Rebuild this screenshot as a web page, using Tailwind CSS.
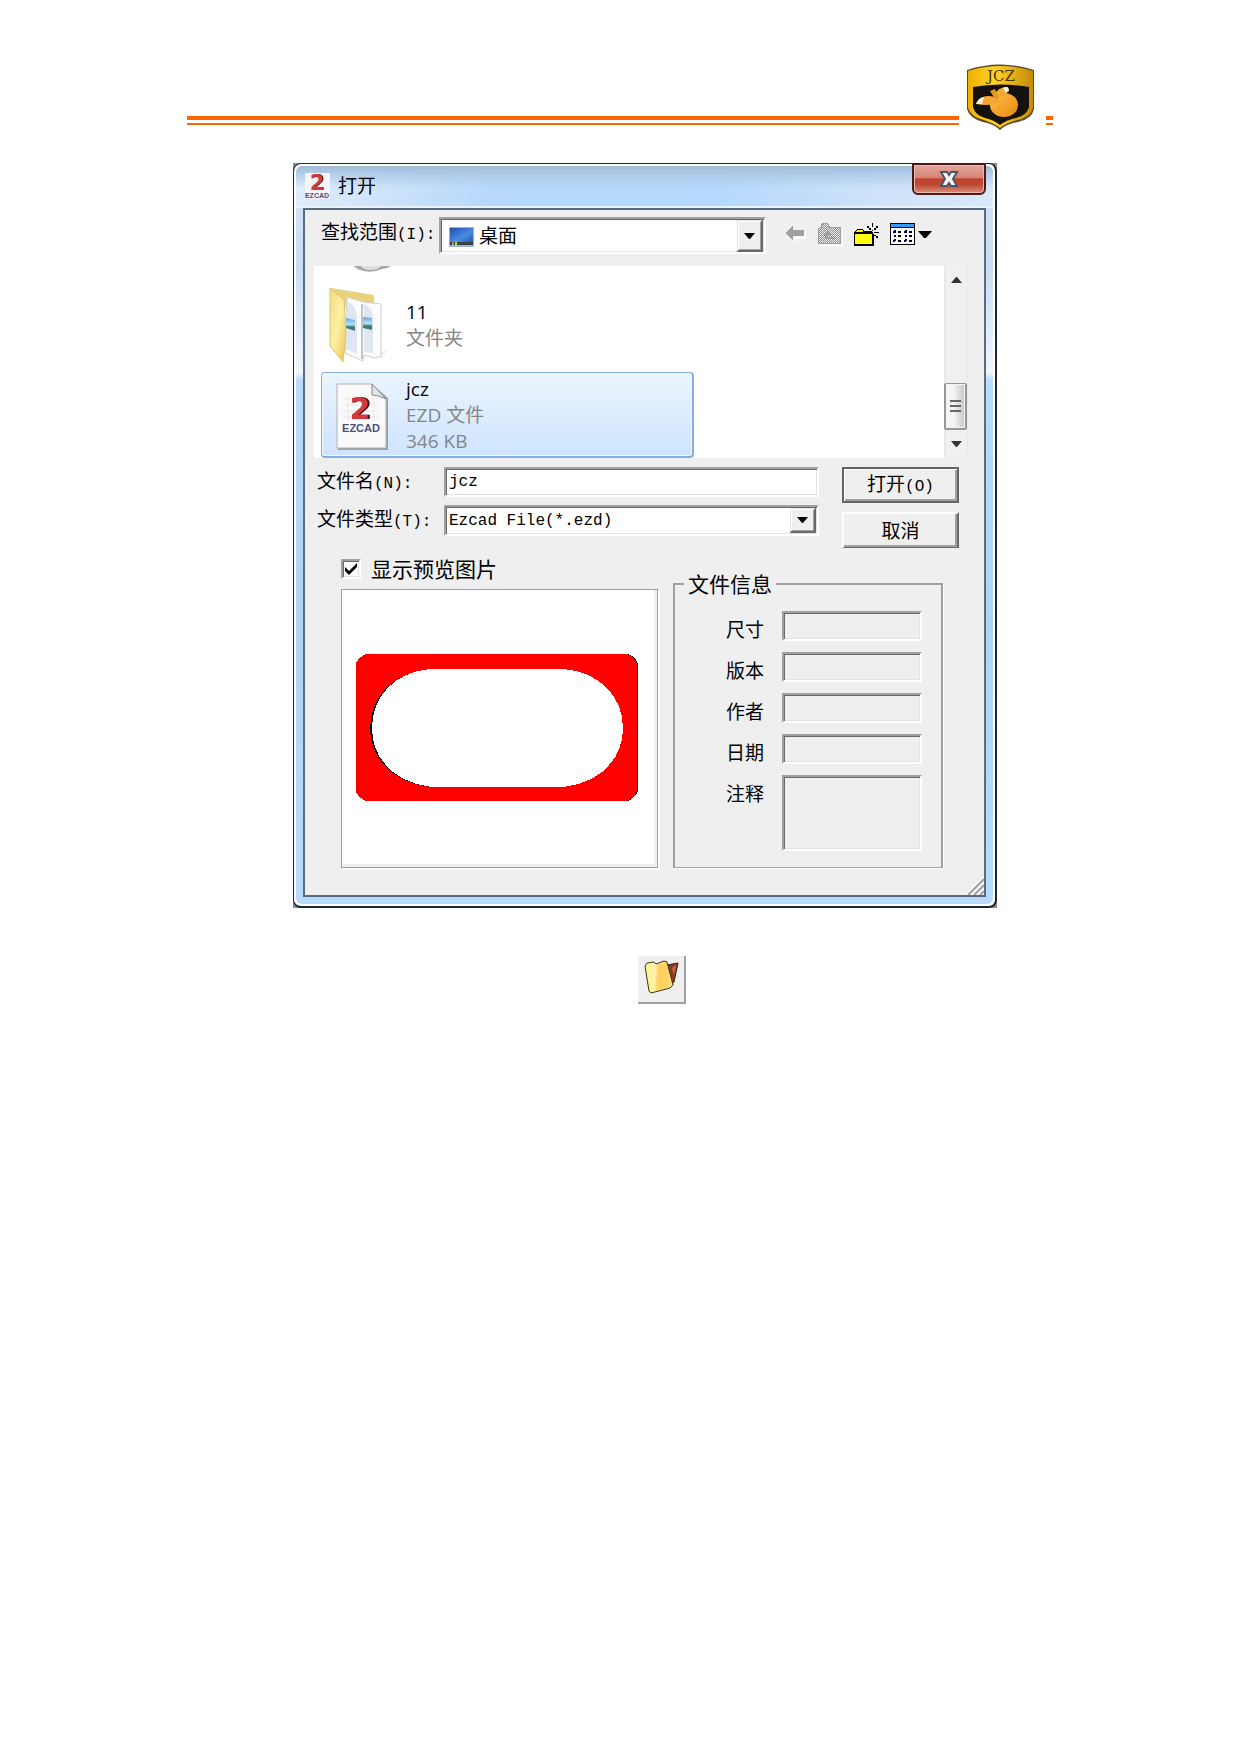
<!DOCTYPE html>
<html lang="zh-CN">
<head>
  <meta charset="UTF-8" />
  <meta name="viewport" content="width=device-width, initial-scale=1.0"/>
  <title>打开</title>
  <script src="https://cdn.jsdelivr.net/npm/@tailwindcss/browser@4"></script>
</head>
<body class="bg-white text-black font-['Open_Sans','Noto_Sans_CJK_SC',sans-serif]">

  <div class="mx-auto w-full max-w-[866px] pt-16">

    <!-- Page header: double rule and shield -->
    <header class="flex items-end">
      <div class="mb-[5px] h-[9px] flex-1 border-t-4 border-b-2 border-[#ff6600]"></div>
      <svg class="mr-[11px] ml-[7px] h-[66px] w-[69px]" viewBox="0 0 69 66" role="img" aria-label="JCZ">
        <defs>
          <linearGradient id="gold" x1="0" y1="0" x2="1" y2="0">
            <stop offset="0" stop-color="#f0b000"/><stop offset=".4" stop-color="#ffd428"/><stop offset="1" stop-color="#c88a08"/>
          </linearGradient>
          <linearGradient id="fruit" x1="0" y1="0" x2="1" y2="1">
            <stop offset="0" stop-color="#ffc04a"/><stop offset="1" stop-color="#e88a10"/>
          </linearGradient>
        </defs>
        <path d="M1 6Q34 -5 68 6V45Q66 55 52 58Q40 60 34 66Q28 60 17 58Q3 54 1 45Z" fill="#5a4a28"/>
        <path d="M2 7Q34 -3 67 7V44Q64 54 51 56Q40 59 34 64Q28 59 18 56Q5 53 2 44Z" fill="url(#gold)"/>
        <path d="M7 23Q34 18 63 23V43Q61 51 50 54Q40 56 34 61Q28 56 19 54Q9 51 7 43Z" fill="#15110f"/>
        <text x="35" y="17" text-anchor="middle" font-family="DejaVu Serif, serif" font-size="15" fill="#4a3200">JCZ</text>
        <ellipse cx="38" cy="41" rx="14" ry="12" fill="url(#fruit)"/>
        <path d="M10 40Q15 29 29 33L34 37Q26 43 10 40Z" fill="#f5a832"/>
        <path d="M10 40Q12 34 18 33L16 40Z" fill="#fff3d8"/>
        <path d="M29 31Q31 23 42 23Q43 30 34 34Z" fill="#f5a832"/>
        <path d="M37 24Q43 21 43 27L40 29Z" fill="#fff3d8"/>
        <path d="M24 27L29 25L33 34L29 35Z" fill="#e0961f"/>
      </svg>
      <div class="mb-[5px] h-[9px] w-[7px] border-t-4 border-b-2 border-[#ff6600]"></div>
    </header>

    <!-- Open dialog -->
    <main class="mt-[33px] flex justify-center pl-[50px]">
      <div class="w-full max-w-[704px] bg-[#8a8a8a]">
        <div class="rounded-lg border border-r-2 border-b-2 border-[#1c2530] bg-white p-[2px]">
          <div class="rounded-md bg-[linear-gradient(to_bottom,#d3e4f6_0%,#c8ddf3_14%,#eef5fd_28%,#b9dbfd_29%,#b0d2f5_62%,#b9dbfd_100%)] pb-[7px]">

            <div class="flex h-[42px] items-start justify-between rounded-t-md border-b-2 border-[#e8f3fd] bg-[linear-gradient(to_bottom,#a3bbd5_0px,#adc8e6_6px,transparent_22px),linear-gradient(to_right,#dfecfa_0%,#b7d8fb_28%,#b5d8fc_60%,#cfe3f9_85%,#d8e8fa_100%)] pl-[9px]">
              <div class="flex items-center gap-2 pt-[7px]">
                <svg class="h-[26px] w-[25px] overflow-visible" viewBox="0 0 25 26" aria-hidden="true">
                  <rect width="25" height="26" fill="#f6f4f8"/>
                  <text x="12" y="17" text-anchor="middle" font-family="DejaVu Sans, sans-serif" font-weight="bold" font-size="21" fill="#d23a3e" class="drop-shadow-[1px_0_0_#3a1515]">2</text>
                  <text x="12" y="25" text-anchor="middle" font-family="Liberation Sans, sans-serif" font-weight="bold" font-size="7" fill="#4a5078">EZCAD</text>
                </svg>
                <h1 class="text-[19px] leading-6">打开</h1>
              </div>
              <button type="button" aria-label="关闭" class="-mt-[2px] mr-[7px] flex h-[31px] w-[74px] items-center justify-center rounded-b-md border-2 border-t border-[#4a1a18] bg-[linear-gradient(to_bottom,#e3a79c_0%,#d58478_45%,#c2412b_50%,#bd4a34_70%,#dc8e7c_100%)] shadow-[inset_0_0_0_1px_#eab8ae]">
                <svg class="h-[18px] w-[20px]" viewBox="0 0 20 18" aria-hidden="true">
                  <path d="M2 2H8L10 5L12 2H18L14 9L18 16H12L10 13L8 16H2L6 9Z" fill="#f4f4f4" stroke="#4f5568" stroke-width="2"/>
                </svg>
              </button>
            </div>

            <form class="relative mx-[7px] border-2 border-[#5a6b7e] bg-[#efefef] pt-[7px] pb-[27px]">

              <div class="flex items-center pr-[52px] pl-4">
                <label for="lookIn" class="w-[118px] pb-1 text-[19px] leading-6">查找范围<span class="font-['Liberation_Mono',monospace] text-[16px]">(I):</span></label>
                <div class="relative flex-1">
                  <select id="lookIn" class="block h-[37px] w-full appearance-none border-2 border-[#a0a0a0] border-r-white border-b-white bg-white pl-[38px] text-[19px] leading-6 shadow-[inset_1px_1px_0_#696969,inset_-1px_-1px_0_#e3e3e3] outline-none">
                    <option>桌面</option>
                  </select>
                  <svg class="pointer-events-none absolute top-[10px] left-[10px] h-5 w-[25px]" viewBox="0 0 25 20" aria-hidden="true">
                    <defs>
                      <linearGradient id="screen" x1="0" y1="0" x2="1" y2="1">
                        <stop offset="0" stop-color="#1c4fb0"/><stop offset=".6" stop-color="#4a8ce0"/><stop offset="1" stop-color="#1e58b8"/>
                      </linearGradient>
                    </defs>
                    <rect width="25" height="20" fill="#9fb4cc"/>
                    <rect x="1" y="1" width="23" height="14" fill="url(#screen)"/>
                    <rect x="1" y="15" width="23" height="3" fill="#3a3f48"/>
                    <rect x="3" y="14" width="2" height="2" fill="#f06030"/><rect x="6" y="14" width="2" height="2" fill="#70d040"/>
                    <rect x="3" y="16" width="2" height="2" fill="#40b0f0"/><rect x="6" y="16" width="2" height="2" fill="#f8d030"/>
                  </svg>
                  <span class="pointer-events-none absolute top-[3px] right-[3px] flex h-8 w-[26px] items-center justify-center border-t border-r-2 border-b-2 border-l border-t-[#e3e3e3] border-r-[#696969] border-b-[#696969] border-l-[#e3e3e3] bg-[#efefef] shadow-[inset_1px_1px_0_#fff,inset_-1px_-1px_0_#a0a0a0]">
                    <svg class="h-[6px] w-[11px]" viewBox="0 0 11 6" aria-hidden="true"><path d="M0 0H11L6 6H5Z"/></svg>
                  </span>
                </div>

                <div class="flex items-center pb-[3px] pl-[19px]">
                  <button type="button" aria-label="后退">
                    <svg class="h-[18px] w-[22px]" viewBox="0 0 22 18" shape-rendering="crispEdges" aria-hidden="true">
                      <path d="M2 10L10 18V14H21V7L10 12Z" fill="#fff"/>
                      <path d="M0 8L8 0V5H19V11H8V16Z" fill="#a0a0a0"/>
                    </svg>
                  </button>
                  <button type="button" aria-label="向上一级" class="ml-[11px]">
                    <svg class="h-[23px] w-[25px]" viewBox="0 0 25 23" shape-rendering="crispEdges" aria-hidden="true">
                      <defs>
                        <pattern id="grayDots" width="2" height="2" patternUnits="userSpaceOnUse">
                          <rect width="2" height="2" fill="#efefef"/><rect width="1" height="1" fill="#8c8c8c"/><rect x="1" y="1" width="1" height="1" fill="#8c8c8c"/>
                        </pattern>
                      </defs>
                      <path d="M2 22H24V6H25V23H2Z" fill="#fff"/>
                      <path d="M0 21V5H2L4 0H10L12 4H23V21Z" fill="#a0a0a0"/>
                      <path d="M1 20V6H3L5 1H9L11 5H22V20Z" fill="url(#grayDots)"/>
                      <path d="M9 7L13 12H10V14H17V16H7V12H5Z" fill="#a0a0a0"/>
                    </svg>
                  </button>
                  <button type="button" aria-label="新建文件夹" class="ml-[11px]">
                    <svg class="h-[23px] w-[26px]" viewBox="0 0 26 23" shape-rendering="crispEdges" aria-hidden="true">
                      <defs>
                        <pattern id="yellowDots" width="2" height="2" patternUnits="userSpaceOnUse">
                          <rect width="2" height="2" fill="#ffff00"/><rect width="1" height="1" fill="#ffffb0"/>
                        </pattern>
                      </defs>
                      <path d="M0 23V9L3 6H8L10 8H18L20 12V23Z"/>
                      <path d="M1 9H9V8L8 7H4Z" fill="#ff0"/>
                      <rect x="1" y="11" width="17" height="10" fill="url(#yellowDots)"/>
                      <path d="M18 0H19V4H18ZM18 7H19V8H18ZM18 14H19V17H18ZM20 9H25V10H20ZM12 9H16V10H12ZM13 3H15V5H13ZM15 5H17V7H15ZM22 3H24V5H22ZM20 5H22V7H20ZM20 12H22V13H20ZM22 13H24V15H22Z"/>
                    </svg>
                  </button>
                  <button type="button" aria-label="查看" class="ml-[10px] flex items-center gap-[3px]">
                    <svg class="h-[22px] w-[25px]" viewBox="0 0 25 22" shape-rendering="crispEdges" aria-hidden="true">
                      <path d="M0 0H25V22H0Z"/>
                      <path d="M1 1H24V4H1Z" fill="#3399ff"/>
                      <path d="M1 5H24V21H1Z" fill="#fff"/>
                      <path d="M4 7H6V10H4ZM4 12H6V14H4ZM4 16H6V18H4ZM15 7H17V10H15ZM15 12H17V14H15ZM15 16H17V18H15Z" fill="#000080"/>
                      <path d="M3 8H5V10H3ZM3 17H5V19H3ZM14 8H16V10H14ZM14 17H16V19H14Z" fill="#000080"/>
                      <path d="M8 8H11V10H8ZM8 12H11V14H8ZM8 17H11V19H8ZM19 8H22V10H19ZM19 12H22V14H19ZM19 17H22V19H19Z"/>
                    </svg>
                    <svg class="h-[7px] w-[14px]" viewBox="0 0 14 7" aria-hidden="true"><path d="M0 0H14L8 7H6Z"/></svg>
                  </button>
                </div>
              </div>

              <!-- File list -->
              <div class="mt-3 mr-4 ml-[9px] flex h-48 bg-white">
                <div class="flex-1 overflow-hidden pl-[7px]">
                  <svg class="ml-8 h-[6px] w-10" viewBox="0 0 40 6" aria-hidden="true">
                    <path d="M1 0H38Q34 3 29 3Q18 8 7 4Q2 2 1 0Z" fill="#a8a8a8"/>
                    <path d="M8 0H28Q26 4 16 4Q9 3 8 0Z" fill="#dedede"/>
                  </svg>
                  <div class="mt-[15px] flex items-center gap-[17px] pl-2">
                    <svg class="h-[75px] w-[60px]" viewBox="0 0 60 75" aria-hidden="true">
                      <defs>
                        <linearGradient id="folder" x1="0" y1="0" x2="1" y2="1">
                          <stop offset="0" stop-color="#f0dc84"/><stop offset=".5" stop-color="#fdf0a4"/><stop offset="1" stop-color="#e8c050"/>
                        </linearGradient>
                        <linearGradient id="photo" x1="0" y1="0" x2="0" y2="1">
                          <stop offset="0" stop-color="#5aa8e8"/><stop offset=".5" stop-color="#b8e0f8"/><stop offset=".7" stop-color="#3c7c60"/><stop offset="1" stop-color="#3a78b8"/>
                        </linearGradient>
                      </defs>
                      <path d="M44 68L60 62L52 71Z" fill="#f0f0f0"/>
                      <path d="M2 1L45 8V28L14 20Z" fill="#e9d27c"/>
                      <path d="M18 10L34 15L52 17V69L46 71L35 68L34 74L16 66Z" fill="#fcfcfc" stroke="#d0d0d0"/>
                      <path d="M18 14Q27 18 28 30V67L17 62Z" fill="#dfe6f2"/>
                      <path d="M35 17Q43 20 44 30V66L35 65Z" fill="#dfe6f2"/>
                      <path d="M17 31L26 33V44L17 41Z" fill="url(#photo)"/>
                      <path d="M34 30L43 31V43L34 41Z" fill="url(#photo)"/>
                      <path d="M33 17V72" stroke="#c4c4c4" stroke-width="2"/>
                      <path d="M1 1L15 13L17 48L14 75L1 59Z" fill="url(#folder)" stroke="#e0c46c"/>
                    </svg>
                    <div class="text-[19px] leading-[26px]">
                      <p>11</p>
                      <p class="text-[#858585]">文件夹</p>
                    </div>
                  </div>
                  <div class="mt-[10px] mr-[250px] flex h-[86px] items-center gap-[17px] rounded-sm border border-r-2 border-b-2 border-[#84acdd] bg-linear-to-b from-[#ebf4fe] to-[#cfe4ff] pl-[7px] shadow-[inset_0_0_0_1px_#f2f8ff]">
                    <svg class="h-[70px] w-[60px]" viewBox="0 0 60 70" aria-hidden="true">
                      <path d="M9 5H44L59 18V70H9Z" fill="#9aa0a8"/>
                      <path d="M8 4H43L57 18V68H8Z" fill="#fbfafa" stroke="#b0b0b0"/>
                      <path d="M43 4V15Q49 15 57 19Z" fill="#e4e4e6" stroke="#888"/>
                      <path d="M14 19H44M14 25H50M14 31H50M14 37H50M19 15V41M45 19V41" stroke="#ebe6ea"/>
                      <text x="31" y="39" text-anchor="middle" font-family="DejaVu Sans, sans-serif" font-weight="bold" font-size="30" fill="#d23a3e" class="drop-shadow-[2px_0_0_#3a1515]">2</text>
                      <text x="32" y="52" text-anchor="middle" font-family="Liberation Sans, sans-serif" font-weight="bold" font-size="11" fill="#4a5080">EZCAD</text>
                    </svg>
                    <div class="text-[19px] leading-[26px] text-[#858585]">
                      <p class="text-black">jcz</p>
                      <p>EZD 文件</p>
                      <p>346 KB</p>
                    </div>
                  </div>
                </div>
                <div class="flex w-6 flex-col border-r border-l-2 border-[#e8e8e8] bg-[#f0f0f0]">
                  <button type="button" aria-label="向上滚动" class="flex h-7 items-center justify-center">
                    <svg class="h-[6px] w-[11px]" viewBox="0 0 11 6" aria-hidden="true"><path d="M0 6L5 0H6L11 6Z" fill="#333"/></svg>
                  </button>
                  <div class="mt-[89px] -ml-[2px] flex h-[47px] flex-col items-center justify-center gap-[3px] rounded-xs border-2 border-t border-[#979797] bg-linear-to-r from-[#f5f5f5] from-40% to-[#c4c4c8] shadow-[inset_0_0_0_1px_#f4f4f4]">
                    <span class="h-[2px] w-[11px] bg-[#666]"></span>
                    <span class="h-[2px] w-[11px] bg-[#666]"></span>
                    <span class="h-[2px] w-[11px] bg-[#666]"></span>
                  </div>
                  <button type="button" aria-label="向下滚动" class="flex h-7 items-center justify-center">
                    <svg class="h-[6px] w-[11px]" viewBox="0 0 11 6" aria-hidden="true"><path d="M0 0H11L6 6H5Z" fill="#333"/></svg>
                  </button>
                </div>
              </div>

              <!-- File name, type and actions -->
              <div class="mt-[9px] flex gap-[23px] pr-[25px] pl-3">
                <div class="flex flex-1 flex-col gap-2">
                  <div class="flex items-center">
                    <label for="fileName" class="w-[127px] text-[19px] leading-6">文件名<span class="font-['Liberation_Mono',monospace] text-[16px]">(N):</span></label>
                    <input id="fileName" type="text" value="jcz" class="h-[30px] min-w-0 flex-1 border-2 border-[#a0a0a0] border-r-white border-b-white bg-white pl-[3px] font-['Liberation_Mono',monospace] text-[16px] shadow-[inset_1px_1px_0_#696969,inset_-1px_-1px_0_#e3e3e3] outline-none" />
                  </div>
                  <div class="flex items-center">
                    <label for="fileType" class="w-[127px] text-[19px] leading-6">文件类型<span class="font-['Liberation_Mono',monospace] text-[16px]">(T):</span></label>
                    <div class="relative flex-1">
                      <select id="fileType" class="block h-[31px] w-full appearance-none border-2 border-[#a0a0a0] border-r-white border-b-white bg-white pl-[3px] font-['Liberation_Mono',monospace] text-[16px] shadow-[inset_1px_1px_0_#696969,inset_-1px_-1px_0_#e3e3e3] outline-none">
                        <option>Ezcad File(*.ezd)</option>
                      </select>
                      <span class="pointer-events-none absolute top-[3px] right-[3px] flex h-[25px] w-[26px] items-center justify-center border-t border-r-2 border-b-2 border-l border-t-[#e3e3e3] border-r-[#696969] border-b-[#696969] border-l-[#e3e3e3] bg-[#efefef] shadow-[inset_1px_1px_0_#fff,inset_-1px_-1px_0_#a0a0a0]">
                        <svg class="h-[6px] w-[11px]" viewBox="0 0 11 6" aria-hidden="true"><path d="M0 0H11L6 6H5Z"/></svg>
                      </span>
                    </div>
                  </div>
                </div>
                <div class="flex w-[117px] flex-col gap-[9px]">
                  <button type="submit" class="h-9 border-2 border-[#646464] bg-[#efefef] text-[19px] leading-6 shadow-[inset_1px_1px_0_#fff,inset_-2px_-2px_0_#a0a0a0]">打开<span class="font-['Liberation_Mono',monospace] text-[16px]">(O)</span></button>
                  <button type="button" class="h-9 border-t-2 border-r-2 border-b border-l-2 border-t-white border-r-[#696969] border-b-[#696969] border-l-white bg-[#efefef] text-[19px] leading-6 shadow-[inset_-2px_-2px_0_#a0a0a0]">取消</button>
                </div>
              </div>

              <!-- Preview and file information -->
              <div class="mt-[11px] flex gap-[15px] pr-[41px] pl-9">
                <div class="flex flex-1 flex-col gap-[10px]">
                  <div class="flex h-5 items-center gap-[10px]">
                    <div class="relative h-5 w-5">
                      <input id="preview" type="checkbox" checked class="peer block h-5 w-5 appearance-none border-2 border-[#a0a0a0] border-r-white border-b-white bg-white shadow-[inset_1px_1px_0_#696969,inset_-1px_-1px_0_#e3e3e3]" />
                      <svg class="pointer-events-none absolute inset-1 hidden h-3 w-3 peer-checked:block" viewBox="0 0 12 12" aria-hidden="true"><path d="M0 4L4 8L12 0V4L4 12L0 8Z"/></svg>
                    </div>
                    <label for="preview" class="text-[21px] leading-5">显示预览图片</label>
                  </div>
                  <div class="flex flex-1 items-center justify-center border border-[#a0a0a0] bg-white pr-[6px] pb-[2px] shadow-[inset_-3px_-3px_0_#efefef,2px_2px_0_#fff]">
                    <svg class="h-[147px] w-[282px]" viewBox="0 0 282 147" shape-rendering="crispEdges" role="img" aria-label="jcz">
                      <path d="M10 0H272Q280 3 282 10V137Q279 144 272 147H10Q3 144 0 138V9Q3 3 10 0Z"/>
                      <path d="M10 0H271Q279 3 281 10V137Q279 144 271 147H10Q3 144 0 138V9Q3 3 10 0Z" fill="#ff0000"/>
                      <path d="M74 15H208C243 18 267 42 267 74C267 106 243 129 208 133H74C39 129 14 106 14 74C14 42 39 18 74 15Z"/>
                      <path d="M74 15H208C243 18 267 42 267 74C267 106 243 129 208 133H75C40 129 16 106 16 74C16 42 39 18 74 15Z" fill="#fff"/>
                    </svg>
                  </div>
                </div>

                <fieldset class="mt-[13px] w-[270px] border-2 border-b border-[#a0a0a0] pt-[15px] pr-[19px] pb-4 shadow-[1px_1px_0_#fff]">
                  <legend class="ml-[9px] px-1 text-[21px] leading-6">文件信息</legend>
                  <div class="flex flex-col gap-[11px]">
                    <div class="flex items-end justify-end gap-[18px]">
                      <label for="size" class="text-[19px] leading-[22px]">尺寸</label>
                      <input id="size" type="text" readonly class="h-[30px] w-[140px] border-2 border-[#a0a0a0] border-r-white border-b-white bg-[#efefef] shadow-[inset_1px_1px_0_#696969,inset_-1px_-1px_0_#e3e3e3] outline-none" />
                    </div>
                    <div class="flex items-end justify-end gap-[18px]">
                      <label for="version" class="text-[19px] leading-[22px]">版本</label>
                      <input id="version" type="text" readonly class="h-[30px] w-[140px] border-2 border-[#a0a0a0] border-r-white border-b-white bg-[#efefef] shadow-[inset_1px_1px_0_#696969,inset_-1px_-1px_0_#e3e3e3] outline-none" />
                    </div>
                    <div class="flex items-end justify-end gap-[18px]">
                      <label for="author" class="text-[19px] leading-[22px]">作者</label>
                      <input id="author" type="text" readonly class="h-[30px] w-[140px] border-2 border-[#a0a0a0] border-r-white border-b-white bg-[#efefef] shadow-[inset_1px_1px_0_#696969,inset_-1px_-1px_0_#e3e3e3] outline-none" />
                    </div>
                    <div class="flex items-end justify-end gap-[18px]">
                      <label for="date" class="text-[19px] leading-[22px]">日期</label>
                      <input id="date" type="text" readonly class="h-[30px] w-[140px] border-2 border-[#a0a0a0] border-r-white border-b-white bg-[#efefef] shadow-[inset_1px_1px_0_#696969,inset_-1px_-1px_0_#e3e3e3] outline-none" />
                    </div>
                    <div class="flex items-start justify-end gap-[18px]">
                      <label for="note" class="pt-2 text-[19px] leading-[22px]">注释</label>
                      <textarea id="note" readonly class="h-[76px] w-[140px] resize-none border-2 border-[#a0a0a0] border-r-white border-b-white bg-[#efefef] shadow-[inset_1px_1px_0_#696969,inset_-1px_-1px_0_#e3e3e3] outline-none"></textarea>
                    </div>
                  </div>
                </fieldset>
              </div>

              <!-- Resize grip -->
              <svg class="absolute right-0 bottom-0 h-[18px] w-[18px]" viewBox="0 0 18 18" aria-hidden="true">
                <path d="M0 18L18 0M6 18L18 6M12 18L18 12" stroke="#fff" stroke-width="2"/>
                <path d="M2 18L18 2M8 18L18 8M14 18L18 14" stroke="#a0a0a0" stroke-width="2"/>
              </svg>
            </form>
          </div>
        </div>
      </div>
    </main>

    <!-- Toolbar button -->
    <div class="mt-12 flex justify-center pl-[84px]">
      <button type="button" aria-label="打开" class="flex h-12 w-12 items-start justify-center border-r-2 border-b-2 border-[#a0a0a0] bg-[#efefef] pt-1">
        <svg class="h-[34px] w-[35px]" viewBox="0 0 35 34" aria-hidden="true">
          <defs>
            <linearGradient id="open" x1="0" y1="0" x2="1" y2="0">
              <stop offset="0" stop-color="#fff08a"/><stop offset=".35" stop-color="#fff3a8"/><stop offset=".5" stop-color="#ffd668"/><stop offset="1" stop-color="#ffe48c"/>
            </linearGradient>
          </defs>
          <path d="M23 5L34 3L30 22L25 26Z" fill="#8e3a1c" stroke="#3c1c10"/>
          <path d="M28 8L32 5L30 15Z" fill="#c86a48"/>
          <path d="M1 6L3 3L10 2L12 4L20 1L23 2L24 6L29 25L26 28L7 33L5 31Z" fill="url(#open)" stroke="#3a3418"/>
          <path d="M14 6L22 3L27 25L11 30Z" fill="#ffc84e" opacity=".45"/>
        </svg>
      </button>
    </div>
  </div>

</body>
</html>
